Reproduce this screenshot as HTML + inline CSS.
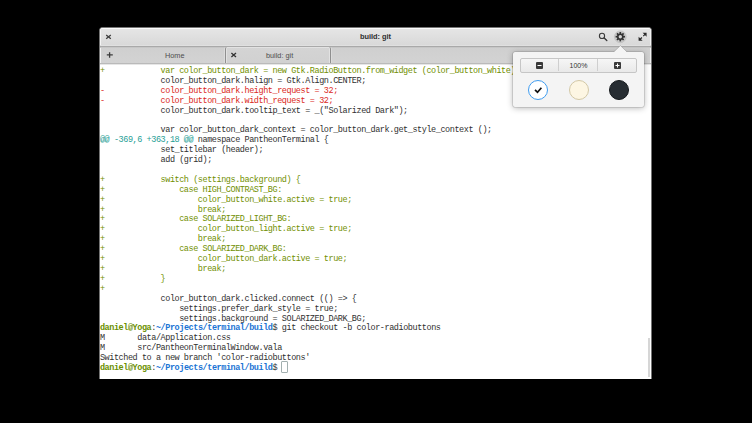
<!DOCTYPE html>
<html><head><meta charset="utf-8">
<style>
html,body{margin:0;padding:0;}
body{width:752px;height:423px;background:#000;position:relative;overflow:hidden;font-family:"Liberation Sans",sans-serif;}
.win{position:absolute;left:99px;top:27px;width:551px;height:351px;background:#fff;border:1px solid #747474;border-bottom:none;border-radius:4px 4px 0 0;overflow:hidden;}
.hdr{position:absolute;left:0;top:0;width:551px;height:19px;background:linear-gradient(#e6e6e6,#d8d8d8);border-bottom:1px solid #a9a9a9;box-sizing:border-box;box-shadow:inset 0 1px 0 #fbfbfb,inset 0 -1px 0 #e0e0e0,inset 1px 0 0 #f4f4f4,inset -1px 0 0 #f4f4f4;}
.title{position:absolute;left:0;width:551px;top:4px;text-align:center;font-weight:bold;font-size:7.4px;color:#2e2e2e;}
.tabs{position:absolute;left:0;top:19px;width:551px;height:17px;background:linear-gradient(#cfcfcf,#d3d3d3);border-bottom:1px solid #bababa;box-sizing:border-box;box-shadow:inset 0 1px 0 #c6c6c6,inset 1px 0 0 #f2f2f2,inset -1px 0 0 #f2f2f2;}
.tab{position:absolute;top:0;height:16px;box-sizing:border-box;}
.tab.active{background:linear-gradient(#d4d4d4,#d1d1d1);border-left:1px solid #8f8f8f;border-right:1px solid #8f8f8f;border-radius:2px 2px 0 0;box-shadow:inset 1px 0 0 #e2e2e2,inset -1px 0 0 #e2e2e2,inset 0 1px 0 #e2e2e2,-1px 0 0 #dcdcdc,1px 0 0 #dcdcdc;}
.tabtxt{position:absolute;top:4px;font-size:7.3px;color:#4d4d4d;white-space:nowrap;}
.term{position:absolute;left:0;top:36px;width:551px;height:315px;background:#fff;box-shadow:inset 0 1px 0 #e6e6e6;}
.l{margin:0;position:absolute;left:-0.1px;font-family:"Liberation Mono",monospace;font-size:8.5px;letter-spacing:-0.436px;line-height:9.9px;color:#303030;white-space:pre;}
.g{color:#718f00;}
.r{color:#da2822;}
.c{color:#1f9e95;}
.gb{color:#6a9000;font-weight:bold;}
.bb{color:#1b74d4;font-weight:bold;}
.cursor{position:absolute;left:181px;top:297px;width:6.5px;height:12px;box-sizing:border-box;border:1px solid #a3b0b0;border-radius:1px;}
.ico{position:absolute;}
.pop{position:absolute;left:513px;top:52px;width:130.5px;height:54.7px;background:#f4f4f4;border-radius:2px;box-shadow:0 0 0 0.6px rgba(0,0,0,.18),0 1px 6px rgba(0,0,0,.3);}
.arrow{position:absolute;left:613px;top:46px;width:0;height:0;border-left:7px solid transparent;border-right:7px solid transparent;border-bottom:7px solid #f4f4f4;}
.btns{position:absolute;left:7px;top:6px;width:116.5px;height:14.6px;box-sizing:border-box;border:1px solid #c6c6c6;border-radius:2px;background:linear-gradient(#f6f6f6,#e9e9e9);}
.sep{position:absolute;top:0;width:1px;height:12px;background:#cfcfcf;}
.zoom{position:absolute;left:38px;top:3.3px;width:39px;text-align:center;font-size:7px;color:#333;}
.circ{position:absolute;top:28px;width:20px;height:20px;border-radius:50%;box-sizing:border-box;}
</style></head><body>
<div class="win">
  <div class="hdr">
    <div class="title">build: git</div>
    <svg class="ico" style="left:5px;top:6px" width="7" height="6" viewBox="0 0 7 6"><path d="M1.2 1L5.8 4.8M5.8 1L1.2 4.8" stroke="#3e3e3e" stroke-width="1.3"/></svg>
    <svg class="ico" style="left:495px;top:1px" width="56" height="17" viewBox="495 2 56 17">
      <circle cx="502" cy="8.9" r="2.6" fill="none" stroke="#3a3a3a" stroke-width="1.1"/><path d="M504.2 11.1L506.8 13.6" stroke="#3a3a3a" stroke-width="1.4" stroke-linecap="round"/>
      <circle cx="520.3" cy="9.8" r="5.9" fill="#c9c9c9" stroke="#bdbdbd" stroke-width="0.7"/>
      <g transform="translate(520.3 9.7)" fill="#333"><circle r="3.3"/><g><rect x="-0.85" y="-4.7" width="1.7" height="9.4"/><rect x="-0.85" y="-4.7" width="1.7" height="9.4" transform="rotate(45)"/><rect x="-0.85" y="-4.7" width="1.7" height="9.4" transform="rotate(90)"/><rect x="-0.85" y="-4.7" width="1.7" height="9.4" transform="rotate(135)"/></g><circle r="1.7" fill="#d4d4d4"/></g>
      <path d="M546.6 5.8L546.6 9.8L542.6 5.8Z M538.6 13.8L538.6 9.8L542.6 13.8Z" fill="#2a2a2a"/><path d="M539.5 12.9L541.9 10.5M543.3 9.1L545.7 6.7" stroke="#2a2a2a" stroke-width="1.2"/>
    </svg>
  </div>
  <div class="tabs">
    <svg class="ico" style="left:6px;top:5px" width="8" height="7" viewBox="0 0 8 7"><path d="M3.6 0.2V5.8M0.8 2.9H6.8" stroke="#3c3c3c" stroke-width="1.3"/></svg>
    <div class="tab active" style="left:125px;width:106px;"></div>
    <svg class="ico" style="left:130px;top:5px" width="7" height="6" viewBox="0 0 7 6"><path d="M1.4 1L6 5M6 1L1.4 5" stroke="#333" stroke-width="1.3"/></svg>
    <div class="tabtxt" style="left:65px;">Home</div>
    <div class="tabtxt" style="left:166px;">build: git</div>
  </div>
  <div class="term">
<div class="l" style="top:2.6px"><span class="g">+            var color_button_dark = new Gtk.RadioButton.from_widget (color_button_white);</span></div>
<div class="l" style="top:12.6px">             color_button_dark.halign = Gtk.Align.CENTER;</div>
<div class="l" style="top:22.6px"><span class="r">-            color_button_dark.height_request = 32;</span></div>
<div class="l" style="top:32.6px"><span class="r">-            color_button_dark.width_request = 32;</span></div>
<div class="l" style="top:42.6px">             color_button_dark.tooltip_text = _("Solarized Dark");</div>
<div class="l" style="top:52.6px">&nbsp;</div>
<div class="l" style="top:61.6px">             var color_button_dark_context = color_button_dark.get_style_context ();</div>
<div class="l" style="top:71.6px"><span class="c">@@ -369,6 +363,18 @@</span> namespace PantheonTerminal {</div>
<div class="l" style="top:81.6px">             set_titlebar (header);</div>
<div class="l" style="top:91.6px">             add (grid);</div>
<div class="l" style="top:101.6px">&nbsp;</div>
<div class="l" style="top:111.6px"><span class="g">+            switch (settings.background) {</span></div>
<div class="l" style="top:121.6px"><span class="g">+                case HIGH_CONTRAST_BG:</span></div>
<div class="l" style="top:131.6px"><span class="g">+                    color_button_white.active = true;</span></div>
<div class="l" style="top:141.6px"><span class="g">+                    break;</span></div>
<div class="l" style="top:150.6px"><span class="g">+                case SOLARIZED_LIGHT_BG:</span></div>
<div class="l" style="top:160.6px"><span class="g">+                    color_button_light.active = true;</span></div>
<div class="l" style="top:170.6px"><span class="g">+                    break;</span></div>
<div class="l" style="top:180.6px"><span class="g">+                case SOLARIZED_DARK_BG:</span></div>
<div class="l" style="top:190.6px"><span class="g">+                    color_button_dark.active = true;</span></div>
<div class="l" style="top:200.6px"><span class="g">+                    break;</span></div>
<div class="l" style="top:210.6px"><span class="g">+            }</span></div>
<div class="l" style="top:220.6px"><span class="g">+</span></div>
<div class="l" style="top:230.6px">             color_button_dark.clicked.connect (() => {</div>
<div class="l" style="top:240.6px">                 settings.prefer_dark_style = true;</div>
<div class="l" style="top:250.6px">                 settings.background = SOLARIZED_DARK_BG;</div>
<div class="l" style="top:259.6px"><span class="gb">daniel@Yoga</span>:<span class="bb">~/Projects/terminal/build</span>$ git checkout -b color-radiobuttons</div>
<div class="l" style="top:269.6px">M       data/Application.css</div>
<div class="l" style="top:279.6px">M       src/PantheonTerminalWindow.vala</div>
<div class="l" style="top:289.6px">Switched to a new branch 'color-radiobuttons'</div>
<div class="l" style="top:299.6px"><span class="gb">daniel@Yoga</span>:<span class="bb">~/Projects/terminal/build</span>$ </div>
    <div class="cursor"></div>
    <div style="position:absolute;left:548px;top:274px;width:2px;height:39px;background:#d6d6d6;"></div>
  </div>
</div>
<div class="pop">
  <div class="btns">
    <div class="sep" style="left:37px"></div><div class="sep" style="left:76px"></div>
    <svg class="ico" style="left:15px;top:3px" width="7" height="7" viewBox="0 0 7 7"><rect width="7" height="7" rx="1" fill="#3a3a3a"/><rect x="1.5" y="3" width="4" height="1" fill="#fff"/></svg>
    <div class="zoom">100%</div>
    <svg class="ico" style="left:93px;top:3px" width="7" height="7" viewBox="0 0 7 7"><rect width="7" height="7" rx="1" fill="#3a3a3a"/><rect x="1.5" y="3" width="4" height="1" fill="#fff"/><rect x="3" y="1.5" width="1" height="4" fill="#fff"/></svg>
  </div>
  <div class="circ" style="left:15px;background:#fff;border:1.3px solid #3f9cf0;"><svg style="position:absolute;left:5px;top:5px" width="9" height="9" viewBox="0 0 9 9"><path d="M1 3.9L3.5 6.2L7.4 1.8" fill="none" stroke="#111" stroke-width="1.7"/></svg></div>
  <div class="circ" style="left:55.5px;background:#fdf6e3;border:1px solid #d3c8a6;"></div>
  <div class="circ" style="left:95.5px;background:#272d32;border:1px solid #15191c;"></div>
</div>
<svg style="position:absolute;left:610px;top:43px" width="21" height="11" viewBox="0 0 21 11"><path d="M3.5 9.2L10.4 2.6L17.3 9.2" fill="#f4f4f4" stroke="rgba(0,0,0,0.22)" stroke-width="0.8"/><rect x="2" y="9" width="17" height="2" fill="#f4f4f4"/></svg>
</body></html>
